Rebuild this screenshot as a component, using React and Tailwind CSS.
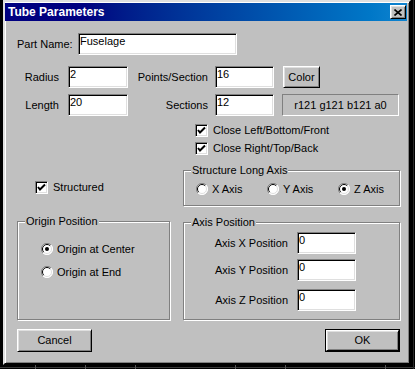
import React from 'react';

// ── Win98-style primitives ────────────────────────────────────────────────────

const SUNKEN =
  'border border-t-[#808080] border-l-[#808080] border-b-white border-r-white shadow-[inset_1px_1px_0_#000,inset_-1px_-1px_0_#dfdfdf]';
const RAISED =
  'border border-t-white border-l-white border-b-black border-r-black shadow-[inset_1px_1px_0_#dfdfdf,inset_-1px_-1px_0_#808080]';

function Field({ value, className = '' }) {
  return (
    <div className={`h-[22px] bg-white pl-[1px] pt-[1px] leading-[13px] ${SUNKEN} ${className}`}>
      {value}
    </div>
  );
}

function Button({ children, className = '' }) {
  return (
    <div className={`flex items-center justify-center bg-[#c0c0c0] ${RAISED} ${className}`}>
      {children}
    </div>
  );
}

function Check({ label }) {
  return (
    <div className="flex items-center gap-[5px] h-[13px]">
      <div className={`w-[13px] h-[13px] bg-white flex items-center justify-center ${SUNKEN}`}>
        <svg width="9" height="9" viewBox="0 0 9 9">
          <polyline points="1,4 3,6.5 8,1.5" fill="none" stroke="#000" strokeWidth="2" />
        </svg>
      </div>
      <span className="leading-[13px]">{label}</span>
    </div>
  );
}

function Radio({ label, checked }) {
  return (
    <div className="flex items-center gap-[4px] h-[12px]">
      <svg width="12" height="12" viewBox="0 0 12 12" className="shrink-0">
        <circle cx="6" cy="6" r="5.5" fill="#fff" />
        <path d="M10 2 A5.5 5.5 0 0 0 2 10" fill="none" stroke="#808080" strokeWidth="1" />
        <path d="M2 10 A5.5 5.5 0 0 0 10 2" fill="none" stroke="#fff" strokeWidth="1" />
        <path d="M9.2 2.8 A4.5 4.5 0 0 0 2.8 9.2" fill="none" stroke="#000" strokeWidth="1" />
        <path d="M2.8 9.2 A4.5 4.5 0 0 0 9.2 2.8" fill="none" stroke="#dfdfdf" strokeWidth="1" />
        {checked && <circle cx="6" cy="6" r="2" fill="#000" />}
      </svg>
      <span className="leading-[13px]">{label}</span>
    </div>
  );
}

function Group({ title, className = '', children }) {
  return (
    <div
      className={`relative border border-[#808080] shadow-[inset_1px_1px_0_#fff,1px_1px_0_#fff] ${className}`}
    >
      <span className="absolute -top-[7px] left-[7px] px-[1px] bg-[#c0c0c0] leading-[13px]">
        {title}
      </span>
      {children}
    </div>
  );
}

// ── Dialog ────────────────────────────────────────────────────────────────────

export default function App() {
  return (
    <div className="relative w-[415px] h-[369px] bg-black overflow-hidden font-['Liberation_Sans',Arial,sans-serif] text-[11px] text-black">
      {/* desk grid behind the dialog */}
      <svg className="absolute left-0 top-0" width="415" height="369">
        <line x1="0" y1="367.5" x2="415" y2="367.5" stroke="#3a3a3a" />
        {[35, 85, 135, 235, 285, 385].map(x => (
          <line key={x} x1={x + 0.5} y1="365" x2={x + 0.5} y2="369" stroke="#555" />
        ))}
        <line x1="413.5" y1="0" x2="413.5" y2="369" stroke="#2a2a2a" />
      </svg>

      <div className="relative ml-[3px] w-[408px] h-[365px] flex flex-col bg-[#c0c0c0] border-2 border-t-[#dfdfdf] border-l-[#dfdfdf] border-r-black border-b-black shadow-[inset_1px_1px_0_#fff,inset_-1px_-1px_0_#808080]">
        {/* Title bar */}
        <div className="mt-[1px] mr-[2px] h-[18px] flex items-center pl-[3px] bg-linear-to-r from-[#000080] from-20% to-[#1084d0]">
          <span className="font-bold text-[12px] text-white leading-[14px]">Tube Parameters</span>
          <Button className="ml-auto mr-[1px] w-[16px] h-[14px]">
            <svg width="8" height="7" viewBox="0 0 8 7">
              <path d="M0.5 0.5 L7.5 6.5 M7.5 0.5 L0.5 6.5" stroke="#000" strokeWidth="1.6" />
            </svg>
          </Button>
        </div>

        {/* Part name */}
        <div className="mt-[12px] flex items-center h-[22px]">
          <span className="ml-[12px] w-[61px]">Part Name:</span>
          <Field value="Fuselage" className="w-[159px]" />
        </div>

        {/* Radius / Points */}
        <div className="mt-[11px] flex items-center h-[22px]">
          <span className="w-[63px] text-right pr-[9px]">Radius</span>
          <Field value="2" className="w-[60px]" />
          <span className="w-[87px] text-right pr-[7px]">Points/Section</span>
          <Field value="16" className="w-[59px]" />
          <Button className="ml-[9px] w-[37px] h-[22px]">Color</Button>
        </div>

        {/* Length / Sections */}
        <div className="mt-[6px] flex items-center h-[22px]">
          <span className="w-[63px] text-right pr-[9px]">Length</span>
          <Field value="20" className="w-[60px]" />
          <span className="w-[87px] text-right pr-[7px]">Sections</span>
          <Field value="12" className="w-[59px]" />
          <div className="ml-[8px] w-[117px] h-[22px] flex items-center justify-center border border-t-[#808080] border-l-[#808080] border-b-white border-r-white">
            r121 g121 b121 a0
          </div>
        </div>

        {/* Close checks */}
        <div className="mt-[8px] ml-[190px]">
          <Check label="Close Left/Bottom/Front" />
        </div>
        <div className="mt-[5px] ml-[190px]">
          <Check label="Close Right/Top/Back" />
        </div>

        {/* Structured + long axis */}
        <div className="mt-[15px] flex items-start">
          <div className="w-[178px] pl-[30px] pt-[11px]">
            <Check label="Structured" />
          </div>
          <Group title="Structure Long Axis" className="w-[217px] h-[36px]">
            <div className="flex pt-[12px] pl-[12px]">
              <div className="w-[71px]"><Radio label="X Axis" /></div>
              <div className="w-[71px]"><Radio label="Y Axis" /></div>
              <div className="w-[60px]"><Radio label="Z Axis" checked /></div>
            </div>
          </Group>
        </div>

        {/* Origin / Axis position */}
        <div className="mt-[15px] flex items-start">
          <Group title="Origin Position" className="ml-[12px] w-[153px] h-[99px]">
            <div className="flex flex-col gap-[11px] pt-[21px] pl-[23px]">
              <Radio label="Origin at Center" checked />
              <Radio label="Origin at End" />
            </div>
          </Group>
          <Group title="Axis Position" className="ml-[13px] mt-[1px] w-[217px] h-[98px]">
            <div className="flex flex-col pt-[9px]">
              <div className="flex items-center">
                <span className="w-[113px] text-right pr-[9px]">Axis X Position</span>
                <Field value="0" className="w-[59px]" />
              </div>
              <div className="mt-[5px] flex items-center">
                <span className="w-[113px] text-right pr-[9px]">Axis Y Position</span>
                <Field value="0" className="w-[59px]" />
              </div>
              <div className="mt-[8px] flex items-center">
                <span className="w-[113px] text-right pr-[9px]">Axis Z Position</span>
                <Field value="0" className="w-[59px]" />
              </div>
            </div>
          </Group>
        </div>

        {/* Buttons */}
        <div className="mt-[9px] flex justify-between pl-[12px] pr-[9px]">
          <Button className="w-[75px] h-[23px]">Cancel</Button>
          <div className="w-[75px] h-[23px] border border-black flex">
            <Button className="flex-1">OK</Button>
          </div>
        </div>
      </div>
    </div>
  );
}
